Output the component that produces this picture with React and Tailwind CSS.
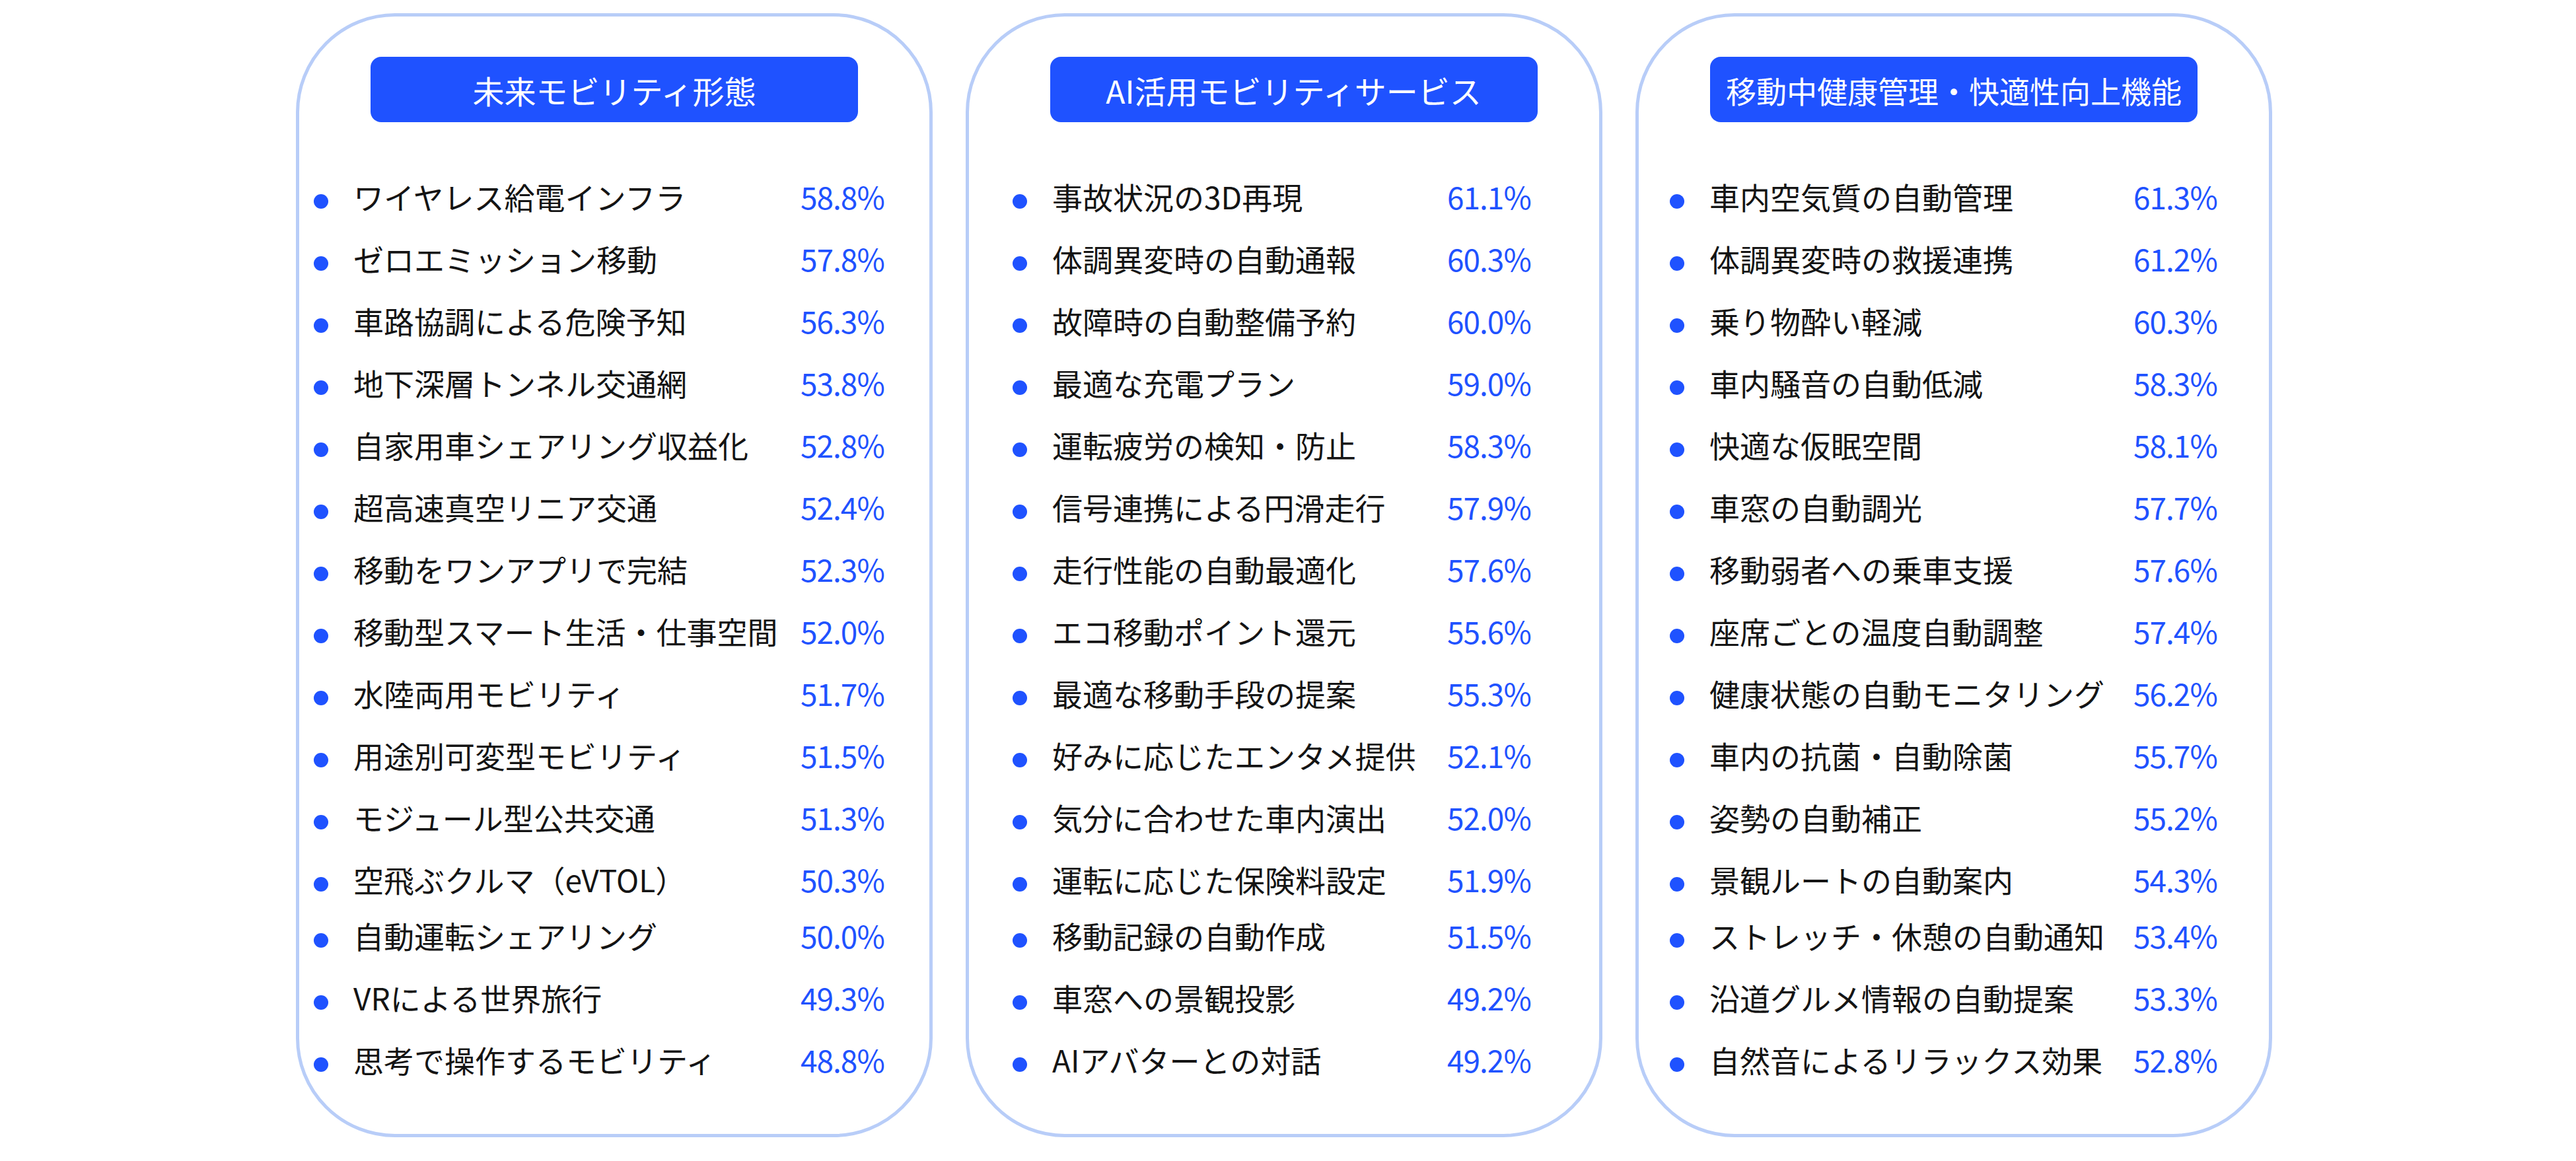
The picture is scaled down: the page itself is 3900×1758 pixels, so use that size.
const columns = [
  {
    title: '未来モビリティ形態',
    titleClass: 'text-[48px]',
    listClass: 'pl-[22px]',
    labelClass: 'w-[677px]',
    items: [
      ['ワイヤレス給電インフラ', '58.8%'],
      ['ゼロエミッション移動', '57.8%'],
      ['車路協調による危険予知', '56.3%'],
      ['地下深層トンネル交通網', '53.8%'],
      ['自家用車シェアリング収益化', '52.8%'],
      ['超高速真空リニア交通', '52.4%'],
      ['移動をワンアプリで完結', '52.3%'],
      ['移動型スマート生活・仕事空間', '52.0%'],
      ['水陸両用モビリティ', '51.7%'],
      ['用途別可変型モビリティ', '51.5%'],
      ['モジュール型公共交通', '51.3%'],
      ['空飛ぶクルマ（eVTOL）', '50.3%'],
      ['自動運転シェアリング', '50.0%'],
      ['VRによる世界旅行', '49.3%'],
      ['思考で操作するモビリティ', '48.8%'],
    ],
  },
  {
    title: 'AI活用モビリティサービス',
    titleClass: 'text-[48px] ml-[29px]',
    listClass: 'pl-[66px]',
    labelClass: 'w-[598px]',
    items: [
      ['事故状況の3D再現', '61.1%'],
      ['体調異変時の自動通報', '60.3%'],
      ['故障時の自動整備予約', '60.0%'],
      ['最適な充電プラン', '59.0%'],
      ['運転疲労の検知・防止', '58.3%'],
      ['信号連携による円滑走行', '57.9%'],
      ['走行性能の自動最適化', '57.6%'],
      ['エコ移動ポイント還元', '55.6%'],
      ['最適な移動手段の提案', '55.3%'],
      ['好みに応じたエンタメ提供', '52.1%'],
      ['気分に合わせた車内演出', '52.0%'],
      ['運転に応じた保険料設定', '51.9%'],
      ['移動記録の自動作成', '51.5%'],
      ['車窓への景観投影', '49.2%'],
      ['AIアバターとの対話', '49.2%'],
    ],
  },
  {
    title: '移動中健康管理・快適性向上機能',
    titleClass: 'text-[46px]',
    listClass: 'pl-[47px]',
    labelClass: 'w-[642px]',
    items: [
      ['車内空気質の自動管理', '61.3%'],
      ['体調異変時の救援連携', '61.2%'],
      ['乗り物酔い軽減', '60.3%'],
      ['車内騒音の自動低減', '58.3%'],
      ['快適な仮眠空間', '58.1%'],
      ['車窓の自動調光', '57.7%'],
      ['移動弱者への乗車支援', '57.6%'],
      ['座席ごとの温度自動調整', '57.4%'],
      ['健康状態の自動モニタリング', '56.2%'],
      ['車内の抗菌・自動除菌', '55.7%'],
      ['姿勢の自動補正', '55.2%'],
      ['景観ルートの自動案内', '54.3%'],
      ['ストレッチ・休憩の自動通知', '53.4%'],
      ['沿道グルメ情報の自動提案', '53.3%'],
      ['自然音によるリラックス効果', '52.8%'],
    ],
  },
];

const Card = ({ title, titleClass, listClass, labelClass, items }) => {
  return (
    <div className="w-[964px] h-[1702px] shrink-0 border-[5px] border-[#b8cdf8] rounded-[150px] bg-white flex flex-col items-center pt-[61px]">
      <div className={`w-[738px] h-[99px] rounded-[16px] bg-[#1f52ff] text-white flex items-center justify-center leading-none ${titleClass}`}>
        {title}
      </div>

      {/* ranking list */}
      <div className={`self-stretch mt-[65px] flex flex-col ${listClass}`}>
        {items.map(([label, value], index) => (
          <div
            key={index}
            className={`flex items-center h-[94px] ${index === 12 ? '-mt-[9px]' : ''}`}
          >
            <span className="w-[22px] h-[22px] rounded-full bg-[#1f52ff] mt-[16px] shrink-0" />
            <span className={`ml-[38px] shrink-0 text-[46px] leading-none text-[#141414] whitespace-nowrap ${labelClass}`}>
              {label}
            </span>
            <span className="text-[46px] leading-none tracking-[-1px] text-[#1f52ff]">{value}</span>
          </div>
        ))}
      </div>
    </div>
  );
};

const App = () => {
  return (
    <div className="w-full h-[1758px] bg-white flex justify-center gap-[50px] pt-[20px] pr-[12px] font-['Noto_Sans_CJK_JP','Noto_Sans',sans-serif]">
      {columns.map((col) => (
        <Card key={col.title} {...col} />
      ))}
    </div>
  );
};

export default App;
